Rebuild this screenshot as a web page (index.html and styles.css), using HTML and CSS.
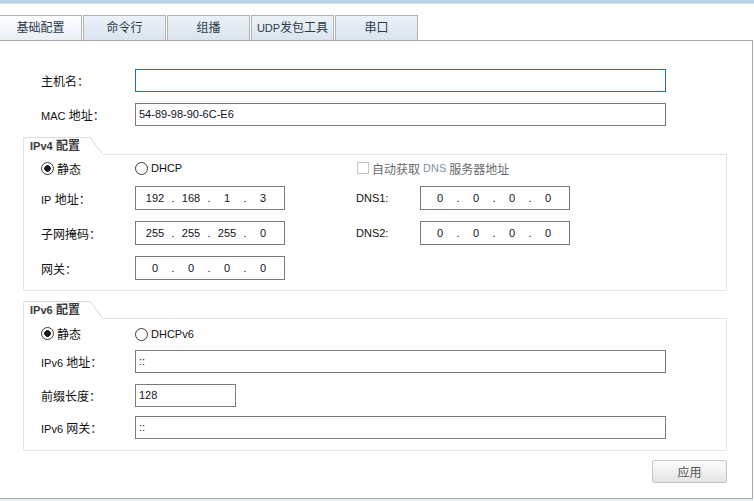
FILE: index.html
```html
<!DOCTYPE html>
<html lang="zh-CN">
<head>
<meta charset="utf-8">
<title>基础配置</title>
<link rel="stylesheet" href="styles.css">
</head>
<body>
<div class="topbar"></div>
<nav class="tabs">
  <div class="tab active">基础配置</div>
  <div class="tab">命令行</div>
  <div class="tab">组播</div>
  <div class="tab"><span class="lat">UDP</span>发包工具</div>
  <div class="tab">串口</div>
</nav>
<main class="panel">
  <div class="row row-host">
    <span class="lbl">主机名：</span>
    <div class="field wide focus"></div>
  </div>
  <div class="row row-mac">
    <span class="lbl"><span class="lat">MAC</span> 地址：</span>
    <div class="field wide">54-89-98-90-6C-E6</div>
  </div>

  <section class="group">
    <header class="group-head">
      <div class="legend"><span class="lat">IPv4</span> 配置</div>
      <svg class="slant" width="13" height="18" viewBox="0 0 13 18"><path d="M0 0.5 L13 17.5" stroke="#d9d9d9" stroke-width="1" fill="none"/></svg>
      <div class="fill"></div>
    </header>
    <div class="group-body v4">
      <span class="radio"><i class="circle on"></i>静态</span>
      <span class="radio"><i class="circle"></i><span class="lat">DHCP</span></span>
      <span></span>
      <span class="check"><i class="box"></i>自动获取 <span class="lat">DNS</span> 服务器地址</span>

      <span class="lbl"><span class="lat">IP</span> 地址：</span>
      <div class="ip"><span class="seg">192</span><span class="dot">.</span><span class="seg">168</span><span class="dot">.</span><span class="seg">1</span><span class="dot">.</span><span class="seg">3</span></div>
      <span></span>
      <span class="lbl lat">DNS1:</span>
      <div class="ip"><span class="seg">0</span><span class="dot">.</span><span class="seg">0</span><span class="dot">.</span><span class="seg">0</span><span class="dot">.</span><span class="seg">0</span></div>

      <span class="lbl">子网掩码：</span>
      <div class="ip"><span class="seg">255</span><span class="dot">.</span><span class="seg">255</span><span class="dot">.</span><span class="seg">255</span><span class="dot">.</span><span class="seg">0</span></div>
      <span></span>
      <span class="lbl lat">DNS2:</span>
      <div class="ip"><span class="seg">0</span><span class="dot">.</span><span class="seg">0</span><span class="dot">.</span><span class="seg">0</span><span class="dot">.</span><span class="seg">0</span></div>

      <span class="lbl">网关：</span>
      <div class="ip"><span class="seg">0</span><span class="dot">.</span><span class="seg">0</span><span class="dot">.</span><span class="seg">0</span><span class="dot">.</span><span class="seg">0</span></div>
    </div>
  </section>

  <section class="group group-v6">
    <header class="group-head">
      <div class="legend"><span class="lat">IPv6</span> 配置</div>
      <svg class="slant" width="13" height="18" viewBox="0 0 13 18"><path d="M0 0.5 L13 17.5" stroke="#d9d9d9" stroke-width="1" fill="none"/></svg>
      <div class="fill"></div>
    </header>
    <div class="group-body v6">
      <div class="row r-radio">
        <span class="lbl"><span class="radio"><i class="circle on"></i>静态</span></span>
        <span class="radio"><i class="circle"></i><span class="lat">DHCPv6</span></span>
      </div>
      <div class="row r-addr">
        <span class="lbl"><span class="lat">IPv6</span> 地址：</span>
        <div class="field wide">::</div>
      </div>
      <div class="row r-prefix">
        <span class="lbl">前缀长度：</span>
        <div class="field short">128</div>
      </div>
      <div class="row">
        <span class="lbl"><span class="lat">IPv6</span> 网关：</span>
        <div class="field wide">::</div>
      </div>
    </div>
  </section>

  <div class="actions">
    <button class="btn" type="button">应用</button>
  </div>
</main>
<div class="bottom"></div>
</body>
</html>
```

FILE: styles.css
```css
* { box-sizing: border-box; }

html, body {
  margin: 0;
  padding: 0;
}

body {
  width: 754px;
  height: 501px;
  overflow: hidden;
  background: #ffffff;
  font-family: "Liberation Sans", "Noto Sans CJK SC", sans-serif;
  font-size: 12px;
  color: #1a1a1a;
}

.lat { font-size: 11px; }

.topbar {
  height: 4px;
  background: #b9d0e7;
  border-bottom: 1px solid #d8e5f2;
}

/* tabs */
.tabs {
  display: flex;
  gap: 1px;
  margin: 11px 0 0 -1px;
  height: 25px;
}

.tab {
  width: 83px;
  height: 25px;
  border: 1px solid #b4b4b4;
  border-bottom: none;
  display: flex;
  align-items: center;
  justify-content: center;
  background: linear-gradient(#edf2f8, #d9e4ef);
  color: #2c3948;
  line-height: 1;
}

.tab.active {
  background: linear-gradient(#fdfeff, #e8eff7);
}

/* panel */
.panel {
  width: 753px;
  border: 1px solid #a9a9a9;
  border-left: none;
  padding: 28px 25px 15px 23px;
}

.row {
  display: flex;
  align-items: center;
}

.panel > .row {
  padding-left: 18px;
}

.row-host { margin-bottom: 11px; }
.row-mac { margin-bottom: 11px; }

.lbl {
  width: 94px;
  flex: none;
  color: #111;
  white-space: nowrap;
}

.field {
  height: 23px;
  border: 1px solid #7b7b7b;
  background: #fff;
  padding-left: 3px;
  line-height: 21px;
  font-size: 11px;
  color: #111122;
}

.field.focus { border-color: #1b6ec2; }
.wide { width: 531px; }
.short { width: 101px; }

/* group boxes */
.group { width: 704px; }
.group-v6 { margin-top: 10px; }

.group-head {
  display: flex;
  height: 18px;
}

.legend {
  width: 67px;
  height: 18px;
  border-top: 1px solid #dcdcdc;
  border-left: 1px solid #e2e2e2;
  padding-left: 6px;
  line-height: 16px;
  font-weight: bold;
  color: #3a3a3a;
  white-space: nowrap;
}

.slant { display: block; flex: none; }

.fill {
  flex: 1;
  border-bottom: 1px solid #e2e2e2;
}

.group-body {
  border: 1px solid #e2e2e2;
  border-top: none;
}

.v4 {
  display: grid;
  grid-template-columns: 94px 150px 71px 64px 150px;
  grid-template-rows: 14px 24px 24px 24px;
  row-gap: 11px;
  align-items: center;
  padding: 6px 0 10px 17px;
}

.v6 {
  padding: 8px 0 11px 17px;
}

.v6 .row { height: 23px; }
.v6 .r-radio { height: 14px; margin-bottom: 9px; }
.v6 .r-addr { margin-bottom: 11px; }
.v6 .r-prefix { margin-bottom: 9px; }

/* radio / checkbox */
.radio {
  display: inline-flex;
  align-items: center;
  gap: 3px;
  color: #111;
  white-space: nowrap;
}

.circle {
  width: 13px;
  height: 13px;
  border: 1px solid #3a3a3a;
  border-radius: 50%;
  background: #fff;
  flex: none;
}

.circle.on {
  background: radial-gradient(circle, #1c1c1c 0 3px, #ffffff 3.6px);
}

.check {
  grid-column: 4 / span 2;
  display: inline-flex;
  align-items: center;
  gap: 3px;
  margin-left: 1px;
  color: #6a6a6a;
  white-space: nowrap;
}

.check .lat { color: #8090a8; }

.box {
  width: 12px;
  height: 12px;
  border: 1px solid #c8c8c8;
  background: #fff;
  flex: none;
}

/* ip inputs */
.ip {
  display: flex;
  align-items: center;
  width: 150px;
  height: 24px;
  border: 1px solid #7b7b7b;
  padding-left: 6px;
  font-size: 11px;
  color: #111122;
}

.seg { width: 26px; text-align: center; }
.dot { width: 10px; text-align: center; }

/* actions */
.actions {
  display: flex;
  justify-content: flex-end;
  margin-top: 9px;
  width: 704px;
}

.btn {
  width: 75px;
  height: 23px;
  border: 1px solid #c4c4c4;
  border-radius: 2px;
  background: linear-gradient(#fdfdfd, #e4e4e4);
  color: #555;
  font-family: "Liberation Sans", "Noto Sans CJK SC", sans-serif;
  font-size: 12px;
  padding: 0;
}

.bottom {
  height: 3px;
  background: #e6eefa;
}
```
